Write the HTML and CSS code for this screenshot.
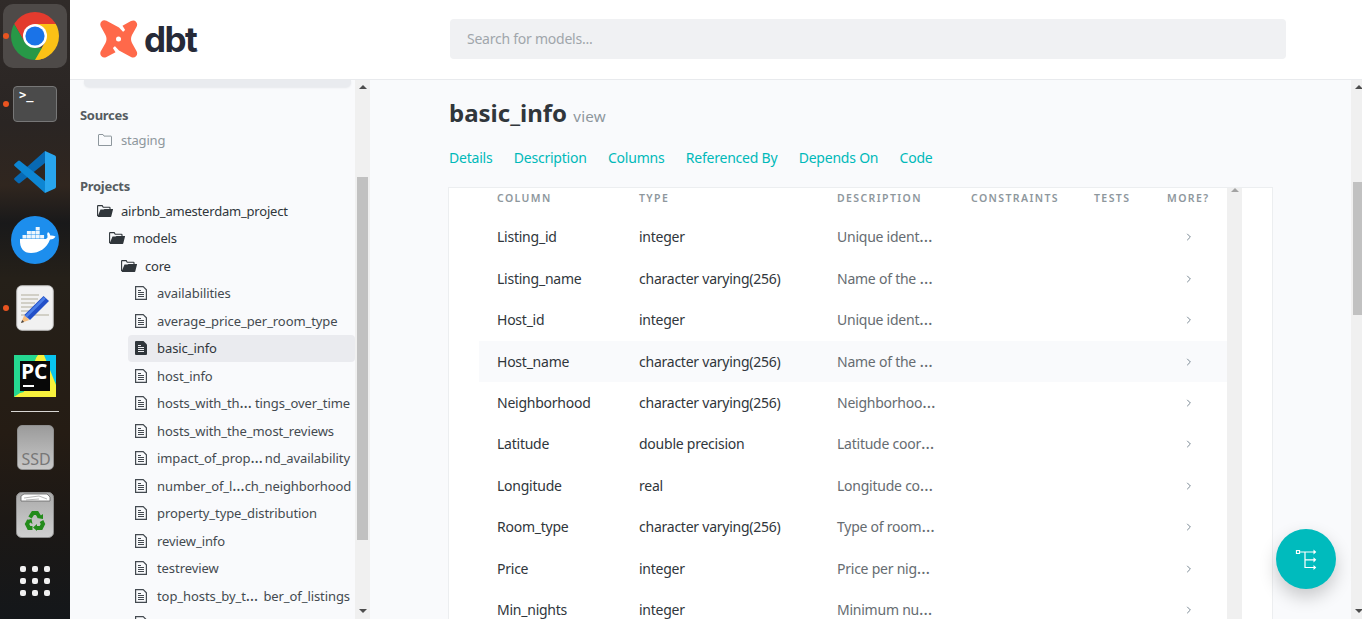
FILE: index.html
```html
<!DOCTYPE html>
<html lang="en">
<head>
<meta charset="utf-8">
<title>basic_info - dbt docs</title>
<link rel="stylesheet" href="styles.css">
</head>
<body>
<svg class="defs" aria-hidden="true">
  <symbol id="file" viewBox="0 0 12 14"><path d="M.6.6h7.6l3.2 3.2v9.6H.6z" fill="none" stroke="currentColor" stroke-width="1.2"/><path d="M3 4.5h3M3 6.5h6M3 8.5h6M3 10.5h6" stroke="currentColor"/></symbol>
  <symbol id="file-on" viewBox="0 0 12 14"><path d="M1 0h7.5L12 3.5V13q0 1-1 1H1q-1 0-1-1V1q0-1 1-1z" fill="currentColor"/><path d="M3 4.5h3M3 6.5h6M3 8.5h6M3 10.5h6" stroke="#eaebef"/></symbol>
  <symbol id="open" viewBox="0 0 16 12"><path d="M.6 11V1.2Q.6.6 1.2.6h4l1 1.600h6.200q.6 0 .6.6v2" fill="none" stroke="currentColor" stroke-width="1.1"/><path d="M3.500 4.600h3l1-.7h8.200q.5 0 .3.6l-1.700 6.800q-.1.700-.7.700H1.200q-.7 0-.5-.7z" fill="currentColor"/></symbol>
  <symbol id="chev" viewBox="0 0 6 8"><path d="M1.200.8 4.400 4 1.200 7.200" fill="none" stroke="currentColor"/></symbol>
</svg>
<div class="desktop">
  <aside class="dock">
    <div class="slot active"><i class="dot"></i>
      <svg width="48" height="48" viewBox="0 0 48 48"><defs><clipPath id="cc"><circle cx="24" cy="24" r="24"/></clipPath></defs><g clip-path="url(#cc)"><path d="M0 0h48v12H24L13.600 30 3.200 12z" fill="#e33b2e"/><path d="M24 12h24v36H24L34.400 30z" fill="#fbc116"/><path d="M3.200 12 13.600 30 24 36h10.400L24 49H0V12z" fill="#279847"/><path d="M34.400 30 24 48h12V30z" fill="#fbc116"/></g><circle cx="24" cy="24" r="12" fill="#fff"/><circle cx="24" cy="24" r="9.600" fill="#1a73e8"/></svg>
    </div>
    <div class="slot"><i class="dot"></i><div class="term">&gt;_</div></div>
    <div class="slot">
      <svg width="42" height="42" viewBox="0 0 42 42"><path d="M31 0v12L6 32q-1 .8-2 0L.6 29q-1-1 0-2z" fill="#0869b3"/><path d="M31 42V30L6 10q-1-.8-2 0L.6 13q-1 1 0 2z" fill="#0d86d3"/><path d="M31 0 41 4.500q1 .5 1 1.700v29.600q0 1.200-1 1.700L31 42z" fill="#28a5ee"/></svg>
    </div>
    <div class="slot">
      <svg width="48" height="48" viewBox="0 0 48 48"><circle cx="24" cy="24" r="24" fill="#1d8eed"/><path d="M9 23h26q2-1 1.500-3-1-2 .5-4 2 1 2.300 3.500 2.500-.3 5.200.9-1.500 2.800-5.500 3.100C35.500 32.500 28 37 20 37 12.500 37 8.500 32.500 9 23z" fill="#fff"/><path d="M11.500 19h4v3.500h-4zm4.400 0h4v3.500h-4zm4.400 0h4v3.500h-4zm4.400 0h4v3.500h-4zm4.400 0h4v3.500h-4zM15.900 15h4v3.500h-4zm4.400 0h4v3.500h-4zm4.400 0h4v3.500h-4zm0-4h4v3.500h-4z" fill="#eef6fd"/></svg>
    </div>
    <div class="slot"><i class="dot"></i>
      <svg width="38" height="46" viewBox="0 0 38 46"><rect x=".8" y=".8" width="36.400" height="44.400" rx="5" fill="#f1f1f1" stroke="#c9c9c9"/><path d="M5 10h18M5 14h17M5 18h14M5 22h12M5 26h9M5 30h28" stroke="#c6c4b8" stroke-width="1.700"/><path d="m5 38 3.300-8 5 5z" fill="#f4bd80"/><path d="m5 38 1.200-3 2 2z" fill="#444"/><path d="M8.300 30 27.500 11l5.500 5-19 19z" fill="#2350c8"/><path d="m9 30.700 18.700-18.700 2 1.800-18.800 18.700z" fill="#4b7fe8"/></svg>
    </div>
    <div class="slot">
      <div class="pycharm"><svg width="42" height="42" viewBox="0 0 42 42"><path d="M0 0h42v42H0z" fill="#21d789"/><path d="M30 0h12v28L32 12z" fill="#09c4ee"/><path d="M18 8 24 0h6l4 10 8 20v12H16L0 40v-1z" fill="#f7f13c"/><path d="M0 0h23L16 20 8 42H0z" fill="#25d891"/><path d="M6 38 22 34l-4 8H0z" fill="#f7f13c"/><path d="M6 6h30v30H6z" fill="#080808"/><path d="M9 31h11" stroke="#fff" stroke-width="2"/></svg><b>PC</b></div>
    </div>
    <hr class="rule">
    <div class="slot"><div class="drive">SSD</div></div>
    <div class="slot">
      <svg width="38" height="46" viewBox="0 0 38 46"><defs><linearGradient id="g" x2="0" y2="1"><stop stop-color="#aaa"/><stop offset="1" stop-color="#d0d0d0"/></linearGradient></defs><rect x=".5" y=".5" width="37" height="45" rx="5" fill="url(#g)" stroke="#8e8e8e"/><path d="M5 9V4l3-2h23l3 3v4z" fill="#fff" stroke="#666" stroke-width=".8"/><path d="m8 6 15-2 8 3M10 8l13-1" stroke="#999" fill="none" stroke-width=".7"/>
      <g fill="none" stroke="#238b1b" stroke-width="4"><path d="m14 25.500 3-4.500h4l2.500 4M25.500 29l1.500 3-2 4h-5M16.500 36H13l-2-4 2-3.500"/></g><path d="m21 26 6-4v5zm0 6v7l-4-3.500zm-10.500-4 5-1 1 5z" fill="#238b1b"/></svg>
    </div>
    <div class="apps"><i></i><i></i><i></i><i></i><i></i><i></i><i></i><i></i><i></i></div>
  </aside>

  <div class="page">
    <header class="top">
      <div class="logo">
        <svg width="38" height="38" viewBox="0 0 38 38"><path d="M6.500.8 19 7.500l4 4.300q1.500-.5 2-2l-2.500-4L31 1q3-1.500 5 .7 2 2.300.6 5L32 15q-2 4 0 8l4.600 8.300q1.400 2.700-.6 5-2 2-5 .7L19 30.500l-4-4.300q-1.500.5-2 2l2.500 4L6.500 37q-3 1.300-5-.7-2-2.200-.7-5L5.500 23q2-4 0-8L.8 6.500Q-.5 3.500 1.500 1.500t5-.7z" fill="#ff694a"/><circle cx="18.500" cy="19" r="2.500" fill="#fff"/></svg>
        <span class="word">dbt</span><span class="mark">.</span>
      </div>
      <div class="search">Search for models...</div>
    </header>

    <div class="body">
      <nav class="side">
        <div class="tree">
          <div class="tabs"></div>
          <h2>Sources</h2>
          <div class="node l1 muted"><svg width="14" height="12" viewBox="0 0 14 12"><path d="M.5 11.500V1q0-.5.5-.5h4l1 1.600h7q.5 0 .5.500v8.900z" fill="none" stroke="currentColor"/></svg><span>staging</span></div>
          <h2 class="projects">Projects</h2>
          <div class="node l1"><svg class="fo"><use href="#open"/></svg><span>airbnb_amesterdam_project</span></div>
          <div class="node l2"><svg class="fo"><use href="#open"/></svg><span>models</span></div>
          <div class="node l3"><svg class="fo"><use href="#open"/></svg><span>core</span></div>
          <div class="node leaf"><svg class="fi"><use href="#file"/></svg><span>availabilities</span></div>
          <div class="node leaf"><svg class="fi"><use href="#file"/></svg><span>average_price_per_room_type</span></div>
          <div class="node leaf on"><svg class="fi"><use href="#file-on"/></svg><span>basic_info</span></div>
          <div class="node leaf"><svg class="fi"><use href="#file"/></svg><span>host_info</span></div>
          <div class="node leaf split"><svg class="fi"><use href="#file"/></svg><span>hosts_with_th<em>…</em></span><span>tings_over_time</span></div>
          <div class="node leaf"><svg class="fi"><use href="#file"/></svg><span>hosts_with_the_most_reviews</span></div>
          <div class="node leaf split"><svg class="fi"><use href="#file"/></svg><span>impact_of_prop<em>…</em></span><span>nd_availability</span></div>
          <div class="node leaf split"><svg class="fi"><use href="#file"/></svg><span>number_of_l<em>…</em></span><span>ch_neighborhood</span></div>
          <div class="node leaf"><svg class="fi"><use href="#file"/></svg><span>property_type_distribution</span></div>
          <div class="node leaf"><svg class="fi"><use href="#file"/></svg><span>review_info</span></div>
          <div class="node leaf"><svg class="fi"><use href="#file"/></svg><span>testreview</span></div>
          <div class="node leaf split"><svg class="fi"><use href="#file"/></svg><span>top_hosts_by_t<em>…</em></span><span>ber_of_listings</span></div>
          <div class="node leaf"><svg class="fi"><use href="#file"/></svg></div>
        </div>
        <div class="bar"><i class="up"></i><i class="thumb"></i><i class="down"></i></div>
      </nav>

      <main class="main">
        <div class="content">
          <h1>basic_info <small>view</small></h1>
          <div class="links"><a>Details</a><a>Description</a><a>Columns</a><a>Referenced By</a><a>Depends On</a><a>Code</a></div>
          <section class="panel">
            <div class="table">
              <div class="row head"><span>COLUMN</span><span>TYPE</span><span>DESCRIPTION</span><span>CONSTRAINTS</span><span>TESTS</span><span>MORE?</span></div>
              <div class="row"><span>Listing_id</span><span>integer</span><span class="desc">Unique ident<em>…</em></span><svg class="ch"><use href="#chev"/></svg></div>
              <div class="row"><span>Listing_name</span><span>character varying(256)</span><span class="desc">Name of the <em>…</em></span><svg class="ch"><use href="#chev"/></svg></div>
              <div class="row"><span>Host_id</span><span>integer</span><span class="desc">Unique ident<em>…</em></span><svg class="ch"><use href="#chev"/></svg></div>
              <div class="row hover"><span>Host_name</span><span>character varying(256)</span><span class="desc">Name of the <em>…</em></span><svg class="ch"><use href="#chev"/></svg></div>
              <div class="row"><span>Neighborhood</span><span>character varying(256)</span><span class="desc">Neighborhoo<em>…</em></span><svg class="ch"><use href="#chev"/></svg></div>
              <div class="row"><span>Latitude</span><span>double precision</span><span class="desc">Latitude coor<em>…</em></span><svg class="ch"><use href="#chev"/></svg></div>
              <div class="row"><span>Longitude</span><span>real</span><span class="desc">Longitude co<em>…</em></span><svg class="ch"><use href="#chev"/></svg></div>
              <div class="row"><span>Room_type</span><span>character varying(256)</span><span class="desc">Type of room<em>…</em></span><svg class="ch"><use href="#chev"/></svg></div>
              <div class="row"><span>Price</span><span>integer</span><span class="desc">Price per nig<em>…</em></span><svg class="ch"><use href="#chev"/></svg></div>
              <div class="row"><span>Min_nights</span><span>integer</span><span class="desc">Minimum nu<em>…</em></span><svg class="ch"><use href="#chev"/></svg></div>
            </div>
            <div class="bar inner"><i class="up"></i></div>
          </section>
        </div>
        <div class="bar outer"><i class="up"></i><i class="thumb"></i><i class="down"></i></div>
      </main>
    </div>
    <button class="fab" aria-label="View lineage graph"><svg width="22" height="22" viewBox="0 0 22 22"><path d="M1.500 1.500h3v3h-3zM5 3h14M10 3v15.500h9M10 10.800h9" fill="none" stroke="#fff" stroke-width="1.200"/><path d="m18.500.4 2.800 2.600-2.800 2.600zm0 7.800 2.800 2.600-2.800 2.600zm0 7.700 2.800 2.600-2.800 2.600z" fill="#fff"/></svg></button>
  </div>
</div>
</body>
</html>
```

FILE: styles.css
```css
* { box-sizing: border-box; }
body { margin: 0; font-family: "Noto Sans", "Open Sans", sans-serif; color: #30363b; }
em { font-style: normal; font-size: 1.2em; line-height: 1px; letter-spacing: 0; }
.defs { display: none; }
.desktop { display: flex; width: 1362px; height: 619px; overflow: hidden; }

/* launcher */
.dock { width: 70px; flex: none; padding-top: 4px; display: flex; flex-direction: column; align-items: center; gap: 4px; background: linear-gradient(#302b29 0, #2a2523 20%, #30261f 30%, #19191a 36%, #252019 45%, #251c14 70%, #1c1815 84%, #14171a 100%); }
.slot { position: relative; width: 64px; height: 64px; border-radius: 10px; display: flex; align-items: center; justify-content: center; flex: none; }
.slot.active { background: #4e4a48; }
.dot { position: absolute; left: 0; top: 29px; width: 6px; height: 6px; border-radius: 50%; background: #e95420; }
.term { width: 44px; height: 36px; border: 1px solid #777; border-radius: 4px; background: #4b4b4b; color: #fff; font: bold 12px/14px "DejaVu Sans Mono", monospace; padding: 1px 5px; }
.pycharm { position: relative; width: 42px; height: 42px; }
.pycharm b { position: absolute; left: 7px; top: 4px; color: #fff; font: 700 21px/25px "Open Sans", sans-serif; letter-spacing: -.300px; }
.rule { width: 48px; height: 1px; flex: none; border: 0; margin: -1px 0 -1px; background: #d8d6d4; }
.drive { width: 37px; height: 45px; border: 1px solid #8e8e8e; border-radius: 5px; background: linear-gradient(#9b9b9b, #c8c8c8); color: #777; font: 16px/18px "Noto Sans", sans-serif; padding: 24px 0 0 4px; }
.apps { display: grid; grid-template-columns: repeat(3, 6px); gap: 6px; margin-top: 15px; }
.apps i { width: 6px; height: 6px; border-radius: 2px; background: #f0f0f0; }

/* header */
.page { position: relative; flex: 1; display: flex; flex-direction: column; background: #f9fafc; }
.top { height: 80px; flex: none; background: #fff; border-bottom: 1px solid #e8eaed; display: flex; padding: 19px 0 0 30px; }
.logo { width: 350px; display: flex; padding-top: 1px; }
.word { margin-left: 6px; font: 700 35px/38px Inter, sans-serif; letter-spacing: -1.600px; color: #262a38; }
.mark { align-self: flex-start; margin: 21px 0 0; font-size: 8px; line-height: 14px; color: #999; }
.search { width: 836px; height: 40px; border-radius: 4px; background: #f0f1f3; color: #a0a6ab; font-size: 14px; line-height: 39px; padding-left: 17px; letter-spacing: -.24px; }

/* sidebar */
.body { flex: 1; display: flex; min-height: 0; }
.side { width: 300px; flex: none; display: flex; overflow: hidden; }
.tree { width: 285px; font-size: 13px; letter-spacing: -.2px; }
.tabs { height: 7px; margin: 0 4px 0 14px; border-radius: 0 0 5px 5px; background: #e9ebef; box-shadow: 0 1px 2px #e6e8ec; }
.tree h2 { margin: 18px 0 0 10px; font-size: 13px; line-height: 20px; font-weight: 700; letter-spacing: -.3px; color: #565c61; }
.tree h2.projects { margin-top: 22px; margin-bottom: 1.600px; }
.node { display: flex; align-items: center; height: 27.500px; color: #30363b; white-space: nowrap; }
.node.l1 { padding-left: 27px; }
.node.l2 { padding-left: 39px; }
.node.l3 { padding-left: 51px; }
.node.leaf { margin-left: 58px; padding-left: 7px; color: #444a50; letter-spacing: -.08px; }
.node.muted { color: #8e979d; margin: 1px 0; padding-left: 28px; }
.node.muted svg { margin-right: 9px; }
.node.on { background: #eaebef; border-radius: 4px; color: #30363b; }
.node.split span:last-child { margin-left: auto; margin-right: 5px; letter-spacing: -.08px; }
.fo { width: 16px; height: 12px; margin-right: 8px; flex: none; }
.fi { width: 12px; height: 14px; margin-right: 10px; flex: none; }

/* scrollbars */
.bar { position: relative; width: 15px; flex: none; background: #f0f0f0; }
.bar i { position: absolute; left: 3.500px; }
.up { top: 5px; border: solid transparent; border-width: 0 4px 4px; border-bottom-color: #4d4d4d; }
.down { bottom: 6px; border: solid transparent; border-width: 4px 4px 0; border-top-color: #4d4d4d; }
.bar .thumb { left: 2px; top: 97px; width: 11px; height: 363px; background: #c1c1c1; }
.bar.outer { width: 11px; overflow: hidden; }
.bar.outer .thumb { top: 102px; height: 133px; }
.bar.inner .up { top: 0; border-bottom-color: #a3a3a3; }

/* model page */
.main { flex: 1; display: flex; min-width: 0; }
.content { flex: 1; padding: 14px 78px 0; overflow: hidden; }
h1 { margin: 0 0 0 1px; font-size: 24px; line-height: 38px; font-weight: 700; letter-spacing: 0; }
h1 small { font-size: 15.200px; font-weight: 400; letter-spacing: .2px; color: #8e979d; }
.links { display: flex; gap: 21.300px; margin: 13px 0 0 1px; height: 39px; font-size: 14px; line-height: 20px; letter-spacing: -.22px; color: #00b9b9; white-space: nowrap; }
.panel { width: 825px; height: 500px; display: flex; padding-left: 30px; border: 1px solid #eceef0; background: #fff; }
.table { width: 748px; font-size: 14px; letter-spacing: -.24px; }
.row { display: grid; grid-template-columns: 142px 198px 134px 123px 73px 60px; height: 41.400px; align-items: center; padding-left: 18px; white-space: nowrap; }
.row.head { height: 28.700px; align-items: start; padding-top: 2px; font-size: 10.500px; line-height: 16px; font-weight: 600; letter-spacing: 1.400px; color: #8e979d; }
.row.hover { background: #f9fafc; }
.row > span { line-height: 16px; }
.desc { color: #666c71; }
.ch { grid-column: 6; width: 6px; height: 8px; margin: 0 0 0 19px; color: #7b8994; }

.fab { position: absolute; left: 1206px; top: 529px; width: 60px; height: 60px; border: 0; border-radius: 50%; padding: 2px 0 0; display: flex; align-items: center; justify-content: center; background: #00bbbd; box-shadow: 0 8px 18px rgba(0, 0, 0, .2); }
```
